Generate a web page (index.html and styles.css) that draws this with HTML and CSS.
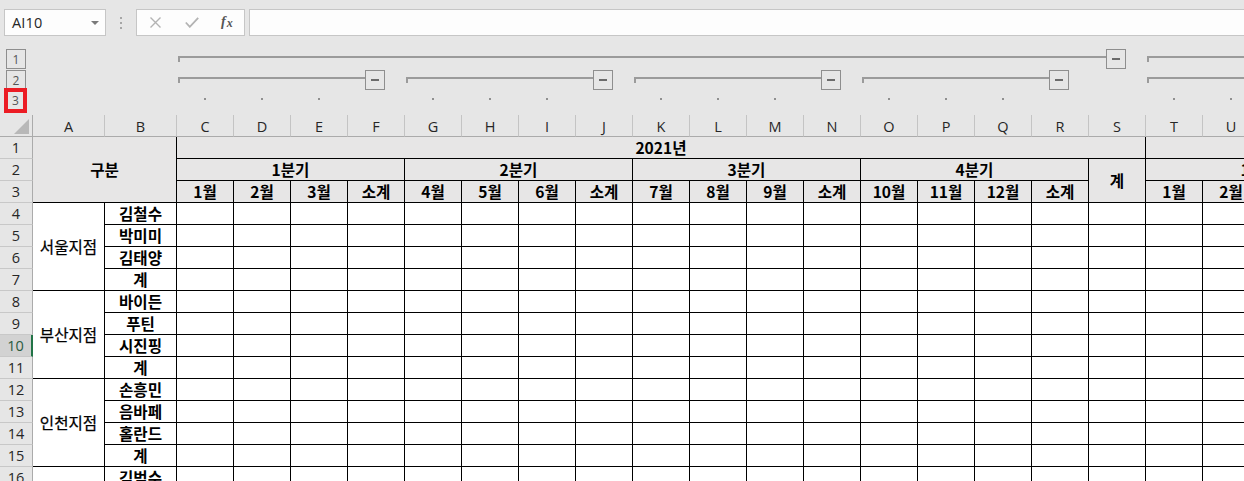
FILE: index.html
```html
<!DOCTYPE html>
<html lang="ko">
<head>
<meta charset="utf-8">
<title>Sheet</title>
<link rel="stylesheet" href="styles.css">
</head>
<body>
<div class="app">
  <div class="fbar">
    <div class="namebox"><span class="ref">AI10</span><i class="caret"></i></div>
    <svg class="vdots" width="4" height="12" viewBox="0 0 4 12"><rect x="1" y="0" width="2" height="2"/><rect x="1" y="5" width="2" height="2"/><rect x="1" y="10" width="2" height="2"/></svg>
    <div class="fbtns">
      <svg class="ic-x" width="11" height="11" viewBox="0 0 11 11"><path d="M0.5 0.5 L10.5 10.5 M10.5 0.5 L0.5 10.5"/></svg>
      <svg class="ic-ok" width="14" height="11" viewBox="0 0 14 11"><path d="M0.8 5.5 L4.8 9.8 L13.2 0.8"/></svg>
      <span class="fx">f<span>x</span></span>
    </div>
    <div class="finput"></div>
  </div>

  <div class="outline">
    <div class="levels">
      <div class="lvl">1</div>
      <div class="lvl">2</div>
      <div class="lvl hl">3</div>
    </div>
    <div class="bar r1 cC17"><i class="ln"></i><span class="minus"><i></i></span></div>
    <div class="bar r1 cT4"><i class="ln"></i><span class="minus"><i></i></span></div>
    <div class="bar r2 cC4"><i class="ln"></i><span class="minus"><i></i></span></div>
    <div class="bar r2 cG4"><i class="ln"></i><span class="minus"><i></i></span></div>
    <div class="bar r2 cK4"><i class="ln"></i><span class="minus"><i></i></span></div>
    <div class="bar r2 cO4"><i class="ln"></i><span class="minus"><i></i></span></div>
    <div class="bar r2 cT4"><i class="ln"></i><span class="minus"><i></i></span></div>
    <i class="dot k4"></i><i class="dot k5"></i><i class="dot k6"></i>
    <i class="dot k8"></i><i class="dot k9"></i><i class="dot k10"></i>
    <i class="dot k12"></i><i class="dot k13"></i><i class="dot k14"></i>
    <i class="dot k16"></i><i class="dot k17"></i><i class="dot k18"></i>
    <i class="dot k21"></i><i class="dot k22"></i><i class="dot k23"></i>
  </div>

  <div class="sheet">
    <div class="corner"><i></i></div>
    <div class="ch">A</div><div class="ch">B</div><div class="ch">C</div><div class="ch">D</div><div class="ch">E</div><div class="ch">F</div><div class="ch">G</div><div class="ch">H</div><div class="ch">I</div><div class="ch">J</div><div class="ch">K</div><div class="ch">L</div><div class="ch">M</div><div class="ch">N</div><div class="ch">O</div><div class="ch">P</div><div class="ch">Q</div><div class="ch">R</div><div class="ch">S</div><div class="ch">T</div><div class="ch">U</div><div class="ch">V</div><div class="ch">W</div>

    <div class="rh">1</div>
    <div class="hd gubun">구분</div>
    <div class="hd sp17">2021년</div>
    <div class="hd sp4"></div>

    <div class="rh">2</div>
    <div class="hd sp4">1분기</div>
    <div class="hd sp4">2분기</div>
    <div class="hd sp4">3분기</div>
    <div class="hd sp4">4분기</div>
    <div class="hd rs2">계</div>
    <div class="hd sp4">1분기</div>

    <div class="rh">3</div>
    <div class="hd">1월</div><div class="hd">2월</div><div class="hd">3월</div><div class="hd">소계</div>
    <div class="hd">4월</div><div class="hd">5월</div><div class="hd">6월</div><div class="hd">소계</div>
    <div class="hd">7월</div><div class="hd">8월</div><div class="hd">9월</div><div class="hd">소계</div>
    <div class="hd">10월</div><div class="hd">11월</div><div class="hd">12월</div><div class="hd">소계</div>
    <div class="hd">1월</div><div class="hd">2월</div><div class="hd">3월</div><div class="hd">소계</div>

    <div class="rh">4</div><div class="br">서울지점</div><div class="nm">김철수</div>
    <div class="d"></div><div class="d"></div><div class="d"></div><div class="d"></div><div class="d"></div><div class="d"></div><div class="d"></div><div class="d"></div><div class="d"></div><div class="d"></div><div class="d"></div><div class="d"></div><div class="d"></div><div class="d"></div><div class="d"></div><div class="d"></div><div class="d"></div><div class="d"></div><div class="d"></div><div class="d"></div><div class="d"></div>
    <div class="rh">5</div><div class="nm">박미미</div>
    <div class="d"></div><div class="d"></div><div class="d"></div><div class="d"></div><div class="d"></div><div class="d"></div><div class="d"></div><div class="d"></div><div class="d"></div><div class="d"></div><div class="d"></div><div class="d"></div><div class="d"></div><div class="d"></div><div class="d"></div><div class="d"></div><div class="d"></div><div class="d"></div><div class="d"></div><div class="d"></div><div class="d"></div>
    <div class="rh">6</div><div class="nm">김태양</div>
    <div class="d"></div><div class="d"></div><div class="d"></div><div class="d"></div><div class="d"></div><div class="d"></div><div class="d"></div><div class="d"></div><div class="d"></div><div class="d"></div><div class="d"></div><div class="d"></div><div class="d"></div><div class="d"></div><div class="d"></div><div class="d"></div><div class="d"></div><div class="d"></div><div class="d"></div><div class="d"></div><div class="d"></div>
    <div class="rh">7</div><div class="nm">계</div>
    <div class="d"></div><div class="d"></div><div class="d"></div><div class="d"></div><div class="d"></div><div class="d"></div><div class="d"></div><div class="d"></div><div class="d"></div><div class="d"></div><div class="d"></div><div class="d"></div><div class="d"></div><div class="d"></div><div class="d"></div><div class="d"></div><div class="d"></div><div class="d"></div><div class="d"></div><div class="d"></div><div class="d"></div>

    <div class="rh">8</div><div class="br">부산지점</div><div class="nm">바이든</div>
    <div class="d"></div><div class="d"></div><div class="d"></div><div class="d"></div><div class="d"></div><div class="d"></div><div class="d"></div><div class="d"></div><div class="d"></div><div class="d"></div><div class="d"></div><div class="d"></div><div class="d"></div><div class="d"></div><div class="d"></div><div class="d"></div><div class="d"></div><div class="d"></div><div class="d"></div><div class="d"></div><div class="d"></div>
    <div class="rh">9</div><div class="nm">푸틴</div>
    <div class="d"></div><div class="d"></div><div class="d"></div><div class="d"></div><div class="d"></div><div class="d"></div><div class="d"></div><div class="d"></div><div class="d"></div><div class="d"></div><div class="d"></div><div class="d"></div><div class="d"></div><div class="d"></div><div class="d"></div><div class="d"></div><div class="d"></div><div class="d"></div><div class="d"></div><div class="d"></div><div class="d"></div>
    <div class="rh sel">10</div><div class="nm">시진핑</div>
    <div class="d"></div><div class="d"></div><div class="d"></div><div class="d"></div><div class="d"></div><div class="d"></div><div class="d"></div><div class="d"></div><div class="d"></div><div class="d"></div><div class="d"></div><div class="d"></div><div class="d"></div><div class="d"></div><div class="d"></div><div class="d"></div><div class="d"></div><div class="d"></div><div class="d"></div><div class="d"></div><div class="d"></div>
    <div class="rh">11</div><div class="nm">계</div>
    <div class="d"></div><div class="d"></div><div class="d"></div><div class="d"></div><div class="d"></div><div class="d"></div><div class="d"></div><div class="d"></div><div class="d"></div><div class="d"></div><div class="d"></div><div class="d"></div><div class="d"></div><div class="d"></div><div class="d"></div><div class="d"></div><div class="d"></div><div class="d"></div><div class="d"></div><div class="d"></div><div class="d"></div>

    <div class="rh">12</div><div class="br">인천지점</div><div class="nm">손흥민</div>
    <div class="d"></div><div class="d"></div><div class="d"></div><div class="d"></div><div class="d"></div><div class="d"></div><div class="d"></div><div class="d"></div><div class="d"></div><div class="d"></div><div class="d"></div><div class="d"></div><div class="d"></div><div class="d"></div><div class="d"></div><div class="d"></div><div class="d"></div><div class="d"></div><div class="d"></div><div class="d"></div><div class="d"></div>
    <div class="rh">13</div><div class="nm">음바페</div>
    <div class="d"></div><div class="d"></div><div class="d"></div><div class="d"></div><div class="d"></div><div class="d"></div><div class="d"></div><div class="d"></div><div class="d"></div><div class="d"></div><div class="d"></div><div class="d"></div><div class="d"></div><div class="d"></div><div class="d"></div><div class="d"></div><div class="d"></div><div class="d"></div><div class="d"></div><div class="d"></div><div class="d"></div>
    <div class="rh">14</div><div class="nm">홀란드</div>
    <div class="d"></div><div class="d"></div><div class="d"></div><div class="d"></div><div class="d"></div><div class="d"></div><div class="d"></div><div class="d"></div><div class="d"></div><div class="d"></div><div class="d"></div><div class="d"></div><div class="d"></div><div class="d"></div><div class="d"></div><div class="d"></div><div class="d"></div><div class="d"></div><div class="d"></div><div class="d"></div><div class="d"></div>
    <div class="rh">15</div><div class="nm">계</div>
    <div class="d"></div><div class="d"></div><div class="d"></div><div class="d"></div><div class="d"></div><div class="d"></div><div class="d"></div><div class="d"></div><div class="d"></div><div class="d"></div><div class="d"></div><div class="d"></div><div class="d"></div><div class="d"></div><div class="d"></div><div class="d"></div><div class="d"></div><div class="d"></div><div class="d"></div><div class="d"></div><div class="d"></div>

    <div class="rh">16</div><div class="br"></div><div class="nm">김범수</div>
    <div class="d"></div><div class="d"></div><div class="d"></div><div class="d"></div><div class="d"></div><div class="d"></div><div class="d"></div><div class="d"></div><div class="d"></div><div class="d"></div><div class="d"></div><div class="d"></div><div class="d"></div><div class="d"></div><div class="d"></div><div class="d"></div><div class="d"></div><div class="d"></div><div class="d"></div><div class="d"></div><div class="d"></div>
  </div>
</div>
</body>
</html>
```

FILE: styles.css
```css
html, body {
  margin: 0;
  padding: 0;
  width: 1244px;
  height: 481px;
  overflow: hidden;
  background: #e6e6e6;
}

.app {
  width: 1244px;
  height: 481px;
  overflow: hidden;
  font-family: "Open Sans", "Noto Sans", sans-serif;
  color: #222;
}

/* ---------- formula bar ---------- */
.fbar {
  display: flex;
  align-items: flex-start;
  height: 49px;
  padding-top: 9px;
  box-sizing: border-box;
}
.namebox {
  margin-left: 4px;
  width: 102px;
  height: 27px;
  box-sizing: border-box;
  border: 1px solid #c6c6c6;
  background: #fdfdfd;
  display: flex;
  align-items: center;
  justify-content: space-between;
  padding: 0 6px 0 7px;
}
.ref {
  font-size: 14.5px;
  color: #262626;
  letter-spacing: 0.2px;
}
.caret {
  width: 0;
  height: 0;
  border-left: 4px solid transparent;
  border-right: 4px solid transparent;
  border-top: 4px solid #7a7a7a;
  margin-top: 1px;
}
.vdots {
  margin-left: 13px;
  margin-top: 8px;
  fill: #a6a6a6;
}
.fbtns {
  margin-left: 13px;
  width: 109px;
  height: 27px;
  box-sizing: border-box;
  border: 1px solid #c6c6c6;
  background: #fdfdfd;
  display: flex;
  align-items: center;
}
.ic-x {
  margin-left: 13px;
  stroke: #b3b3b3;
  stroke-width: 1.4;
  fill: none;
}
.ic-ok {
  margin-left: 24px;
  stroke: #b3b3b3;
  stroke-width: 1.8;
  fill: none;
}
.fx {
  margin-left: 22px;
  font-family: "Liberation Serif", "DejaVu Serif", serif;
  font-style: italic;
  font-weight: bold;
  font-size: 14px;
  color: #555;
  line-height: 1;
  margin-top: -1px;
}
.fx span {
  font-size: 12px;
  position: relative;
  top: 1px;
  margin-left: 1px;
}
.finput {
  margin-left: 4px;
  flex: 1;
  height: 27px;
  box-sizing: border-box;
  border: 1px solid #c6c6c6;
  background: #fdfdfd;
  margin-right: -20px;
}

/* ---------- outline area ---------- */
.outline {
  display: grid;
  grid-template-columns: 33px 72px 72px repeat(21, 57px);
  grid-template-rows: 21px 21px 24px;
}
.levels {
  grid-column: 1;
  grid-row: 1 / span 3;
  display: flex;
  flex-direction: column;
  align-items: flex-start;
  padding-left: 6px;
}
.lvl {
  width: 20px;
  height: 20px;
  box-sizing: border-box;
  border: 1px solid #8e8e8e;
  margin-bottom: 1px;
  display: flex;
  align-items: center;
  justify-content: center;
  font-family: "Open Sans", sans-serif;
  font-size: 12px;
  color: #555;
}
.lvl.hl {
  width: 23px;
  height: 25px;
  margin-left: -2px;
  margin-top: -3px;
  border: 4px solid #ec1c24;
}
.bar {
  display: flex;
  align-items: flex-start;
  padding-left: 1px;
  padding-right: 20px;
}
.bar.r1 { grid-row: 1; }
.bar.r2 { grid-row: 2; }
.cC17 { grid-column: 4 / span 17; }
.cC4 { grid-column: 4 / span 4; }
.cG4 { grid-column: 8 / span 4; }
.cK4 { grid-column: 12 / span 4; }
.cO4 { grid-column: 16 / span 4; }
.cT4 { grid-column: 21 / span 4; }
.ln {
  flex: 1;
  height: 6px;
  margin-top: 7px;
  box-sizing: border-box;
  border-top: 2px solid #9b9b9b;
  border-left: 2px solid #9b9b9b;
}
.minus {
  width: 20px;
  height: 20px;
  box-sizing: border-box;
  border: 1px solid #8e8e8e;
  display: flex;
  align-items: center;
  justify-content: center;
}
.minus i {
  width: 8px;
  height: 2px;
  background: #6b6b6b;
}
.dot {
  grid-row: 3;
  width: 2px;
  height: 2px;
  background: #8f8f8f;
  justify-self: start;
  align-self: start;
  margin-left: 27px;
  margin-top: 7px;
}
.k4 { grid-column: 4; }
.k5 { grid-column: 5; }
.k6 { grid-column: 6; }
.k8 { grid-column: 8; }
.k9 { grid-column: 9; }
.k10 { grid-column: 10; }
.k12 { grid-column: 12; }
.k13 { grid-column: 13; }
.k14 { grid-column: 14; }
.k16 { grid-column: 16; }
.k17 { grid-column: 17; }
.k18 { grid-column: 18; }
.k21 { grid-column: 21; }
.k22 { grid-column: 22; }
.k23 { grid-column: 23; }

/* ---------- sheet ---------- */
.sheet {
  display: grid;
  grid-template-columns: 33px 72px 72px repeat(21, 57px);
  grid-auto-rows: 22px;
}
.sheet > div {
  box-sizing: border-box;
  display: flex;
  align-items: center;
  justify-content: center;
  border-right: 1px solid #000;
  border-bottom: 1px solid #000;
  overflow: hidden;
  white-space: nowrap;
}
.corner {
  background: #e6e6e6;
  border-right-color: #ababab !important;
  border-bottom-color: #ababab !important;
  position: relative;
}
.corner i {
  position: absolute;
  right: 3px;
  bottom: 2px;
  width: 0;
  height: 0;
  border-left: 15px solid transparent;
  border-bottom: 15px solid #b8b8b8;
}
.sheet > .ch {
  background: #e6e6e6;
  border-right-color: #c4c4c4;
  border-bottom-color: #ababab;
  font-size: 14.5px;
  color: #262626;
  padding-top: 1px;
}
.sheet > .rh {
  background: #e6e6e6;
  border-right-color: #ababab;
  border-bottom-color: #c8c8c8;
  font-size: 14.5px;
  color: #262626;
}
.sheet > .rh.sel {
  background: #d2d2d2;
  color: #2a5b3f;
  border-right: 2px solid #217346;
}
.hd, .br, .nm {
  font-family: "Noto Sans CJK KR", "Noto Sans", sans-serif;
  font-size: 15.6px;
  line-height: 1;
  color: #000;
}
.sheet > .hd {
  background: #e7e6e6;
  font-weight: bold;
}
.gubun {
  grid-column: span 2;
  grid-row: span 3;
}
.sp17 { grid-column: span 17; }
.sp4 { grid-column: span 4; }
.rs2 { grid-row: span 2; }
.sheet > .br {
  background: #fff;
  grid-row: span 4;
  -webkit-text-stroke: 0.25px #000;
}
.sheet > .nm {
  background: #fff;
  font-weight: bold;
}
.sheet > .d {
  background: #fff;
}
```
